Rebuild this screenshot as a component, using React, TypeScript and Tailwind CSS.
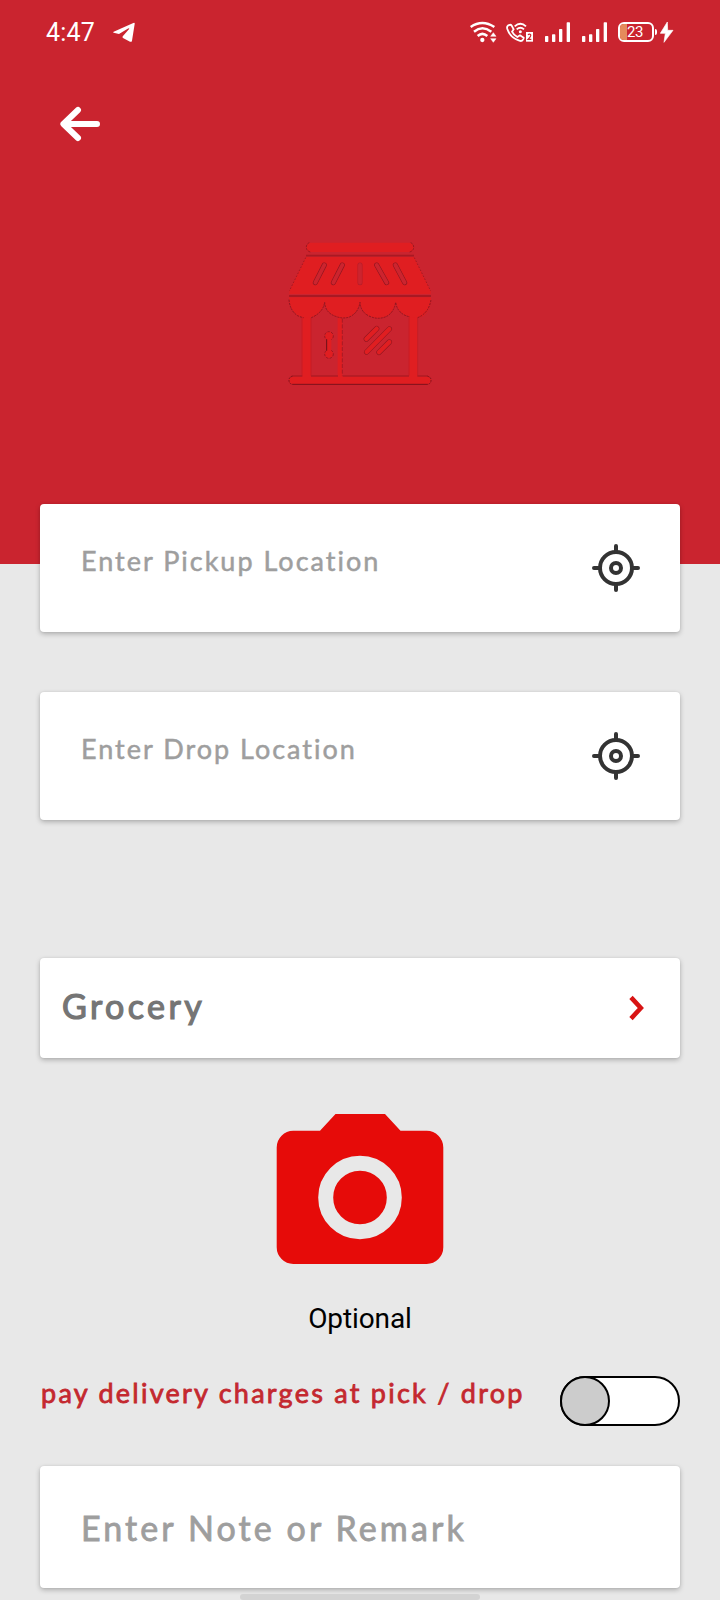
import { ReactNode } from "react";
import clsx from "clsx";

function TelegramIcon() {
  return (
    <svg width="22" height="20" viewBox="340 67 66 60" fill="white">
      <path d="M342 96 L401 70 Q406 68 405 73 L397 123 Q396 128 391 126 L370 115 Q367 112 370 109 L389 87 Q388 84 384 87 L358 103 L342 99 Q339 98 342 96 Z" />
    </svg>
  );
}

function WifiIcon() {
  return (
    <svg width="27" height="22" viewBox="30 33 81 66" fill="none" stroke="white" strokeWidth="7.5">
      <path d="M32 51 Q67 27 103 51" />
      <path d="M42 65 Q67 45 94 65" />
      <path d="M53 78 Q67 65 82 78" />
      <circle cx="67" cy="90" r="6.5" fill="white" stroke="none" />
      <path d="M92 79 L100 68 L108 79 Z M92 86 L100 97 L108 86 Z" fill="white" stroke="white" strokeWidth="1.5" />
    </svg>
  );
}

function WifiCallIcon() {
  return (
    <svg width="28" height="22" viewBox="138 33 84 66" fill="none" stroke="white" strokeWidth="5.5">
      <path
        d="M148 45 Q139 47 142 57 Q151 84 178 92 Q187 95 190 87 L191 83 L180 76 L172 81 Q161 75 156 65 L161 58 L155 47 Q152 43 148 45 Z"
        strokeLinejoin="round"
      />
      <path d="M164 49 Q181 33 198 49" />
      <path d="M170 58 Q181 48 192 58" />
      <circle cx="181" cy="65" r="4.5" fill="white" stroke="none" />
      <rect x="198" y="66" width="21" height="29" fill="white" stroke="none" />
      <path d="M204 75 Q208 70 212 74 Q214 78 204 88 H214" stroke="#ca242f" strokeWidth="3.5" />
    </svg>
  );
}

function SignalIcon() {
  return (
    <svg width="25" height="22" viewBox="255 33 75 66" fill="white">
      <rect x="255" y="78" width="10" height="18" rx="2" />
      <rect x="276" y="73" width="10" height="23" rx="2" />
      <rect x="297" y="57" width="10" height="39" rx="2" />
      <rect x="320" y="37" width="10" height="59" rx="2" />
    </svg>
  );
}

function Battery({ level }: { level: number }) {
  return (
    <div className="flex items-center gap-px">
      <div className="relative h-5 w-9 overflow-hidden rounded-md border-2 border-white">
        <div className="absolute inset-y-0 left-0 bg-[#e58b5c]" style={{ width: `${level}%` }} />
        <div className="relative -ml-0.5 text-center font-['Roboto'] text-[15px] leading-4 tracking-[-0.5px] text-white">
          {level}
        </div>
      </div>
      <div className="h-1.5 w-0.5 rounded-r-sm bg-white" />
    </div>
  );
}

function BoltIcon() {
  return (
    <svg width="14" height="22" viewBox="603 33 42 66" fill="white" stroke="white" strokeWidth="2" strokeLinejoin="round">
      <path d="M625 36 L604 70 H619 L615 97 L642 61 H626 Z" />
    </svg>
  );
}

function StatusBar() {
  return (
    <div className="flex h-16 items-center pl-[46px] pr-[46px]">
      <span className="w-[49px] pt-px font-['Roboto'] text-[25px] leading-8 tracking-[0.2px] text-white">4:47</span>
      <div className="ml-[18px]">
        <TelegramIcon />
      </div>
      <div className="ml-auto flex items-center">
        <WifiIcon />
        <div className="ml-[9px]"><WifiCallIcon /></div>
        <div className="ml-[11px]"><SignalIcon /></div>
        <div className="ml-3"><SignalIcon /></div>
        <div className="ml-[11px]"><Battery level={23} /></div>
        <div className="ml-[3px]"><BoltIcon /></div>
      </div>
    </div>
  );
}

function BackArrow() {
  return (
    <svg width="40" height="36" viewBox="0 0 40 36" fill="none" stroke="white" strokeWidth="6" strokeLinecap="round" strokeLinejoin="round">
      <path d="M18 4 L3.4 18 L18 32 M5 18 H37" />
    </svg>
  );
}

function StoreIcon() {
  return (
    <svg width="180" height="170" viewBox="0 0 540 510" fill="none">
      <rect x="109" y="38" width="322" height="28" rx="13" fill="#e01e21" />
      <path
        d="M121 66 Q109 62 109 52 Q109 42 118 38 M419 66 Q431 62 431 52 Q431 42 422 38"
        stroke="#8f1620"
        strokeWidth="2.5"
        strokeDasharray="7 3"
      />
      <path d="M108 81 H432 L482 182 V192 H58 V182 Z" fill="#e01e21" />
      <path d="M108 77 H432" stroke="#a91923" strokeWidth="5" />
      <path d="M107 83 L58 183 M433 83 L482 183" stroke="#8f1620" strokeWidth="2.5" strokeDasharray="4 6" />
      <g strokeLinecap="round">
        <path
          d="M163 105 L136 158 M217 105 L190 158 M320 105 L350 158 M376 105 L404 158"
          stroke="#8f1620"
          strokeWidth="15"
        />
        <path d="M270 105 V158" stroke="#b41d28" strokeWidth="15" />
        <path
          d="M163 105 L136 158 M217 105 L190 158 M270 105 V158 M320 105 L350 158 M376 105 L404 158"
          stroke="#cc242e"
          strokeWidth="11.5"
        />
      </g>
      <path d="M95 240 H124 V438 H203 V240 H217 V438 H416 V240 H443 V438 H470 Q483 440 483 451 Q483 463 470 463 H70 Q57 463 57 451 Q57 440 70 438 H95 Z" fill="#e01e21" />
      <path d="M57 202 H483 Q484 238 461 257 Q443 268 420 261 Q382 252 377 217 Q371 252 343 262 Q320 269 297 258 Q272 246 270 217 Q265 249 238 261 Q218 268 194 258 Q165 246 164 217 Q159 248 130 261 Q109 267 83 257 Q57 238 57 202 Z" fill="#e01e21" />
      <path
        d="M57 209 Q60 243 83 257 Q93 262 101 263 M124 263 Q159 248 164 217 Q165 246 194 258 Q218 268 238 261 Q265 249 270 217 Q272 246 297 258 Q320 269 343 262 Q371 252 377 217 Q382 252 420 261 M443 263 Q476 250 483 209"
        stroke="#8f1620"
        strokeWidth="3"
        strokeDasharray="6 3"
      />
      <path d="M57 198 H483" stroke="#a91923" strokeWidth="6" />
      <path d="M96 264 V437 M123 264 V437 M417 264 V437 M443 264 V437" stroke="#b91d29" strokeWidth="2" />
      <path d="M217 266 V437" stroke="#a01923" strokeWidth="2.5" strokeDasharray="12 5" />
      <path d="M65 438 H97 M123 438 H204 M218 438 H417 M442 438 H474" stroke="#b01b25" strokeWidth="4" />
      <path d="M67 463 H473" stroke="#7d121b" strokeWidth="3" />
      <path
        d="M67 439 Q57 441 57 451 Q57 461 67 463 M473 439 Q483 441 483 451 Q483 461 473 463"
        stroke="#7d121b"
        strokeWidth="3"
        strokeDasharray="5 3"
      />
      <g fill="#e01e21" stroke="#8f1620" strokeWidth="2.5" strokeDasharray="7 4">
        <circle cx="177" cy="318" r="13" />
        <circle cx="177" cy="372" r="13" />
      </g>
      <path d="M170 325 H184 V364 H170 Z" fill="#e01e21" />
      <path d="M170 328 V362" stroke="#6d1018" strokeWidth="3" />
      <g strokeLinecap="round">
        <path d="M289 327 L320 296 M290 366 L358 297 M327 367 L358 336" stroke="#8f1620" strokeWidth="16" />
        <path d="M289 327 L320 296 M290 366 L358 297 M327 367 L358 336" stroke="#e01e21" strokeWidth="13" />
      </g>
    </svg>
  );
}

function LocateIcon() {
  return (
    <svg width="48" height="48" viewBox="0 0 48 48" fill="none" stroke="#333333" strokeWidth="4" strokeLinecap="round">
      <circle cx="24" cy="24" r="16" />
      <circle cx="24" cy="24" r="5" />
      <path d="M24 2 V7 M24 41 V46 M2 24 H7 M41 24 H46" />
    </svg>
  );
}

function ChevronIcon() {
  return (
    <svg width="16" height="26" viewBox="0 0 16 26" fill="none" stroke="#d81414" strokeWidth="4.6">
      <path d="M2 2.4 L11.8 13 L2 23.6" />
    </svg>
  );
}

function CameraIcon() {
  return (
    <svg width="168" height="150" viewBox="0 0 168 150">
      <path
        d="M59.5 0 H109 L124.5 16.7 H150.7 A16.7 16.7 0 0 1 167.3 33.4 V133.3 A16.7 16.7 0 0 1 150.7 150 H17.3 A16.7 16.7 0 0 1 0.7 133.3 V33.4 A16.7 16.7 0 0 1 17.3 16.7 H44 Z"
        fill="#e60b09"
      />
      <circle cx="84" cy="83.5" r="34.3" fill="none" stroke="#e8e8e8" strokeWidth="15" />
    </svg>
  );
}

interface CardProps {
  className?: string;
  children: ReactNode;
}

function Card({ className, children }: CardProps) {
  return (
    <div
      className={clsx(
        "mx-10 flex items-center justify-between rounded bg-white shadow-[0_2px_5px_rgba(0,0,0,0.25),0_0_2px_rgba(0,0,0,0.08)]",
        className
      )}
    >
      {children}
    </div>
  );
}

function LocationField({ placeholder }: { placeholder: string }) {
  return (
    <Card className="h-32 pl-[41px] pr-10">
      <span className="whitespace-nowrap pb-3.5 text-[27px] tracking-[2px] text-[#9e9e9e] [-webkit-text-stroke:0.5px]">
        {placeholder}
      </span>
      <LocateIcon />
    </Card>
  );
}

export default function App() {
  return (
    <div className="h-[1600px] w-[720px] overflow-hidden bg-[#e8e8e8] font-['Lato',sans-serif] leading-[1.2]">
      <header className="h-[564px] bg-[#ca242f]">
        <StatusBar />
        <div className="pl-[60px] pt-[42px]">
          <BackArrow />
        </div>
        <div className="mt-[88px] flex justify-center">
          <StoreIcon />
        </div>
      </header>

      <main className="relative -mt-[60px]">
        <LocationField placeholder="Enter Pickup Location" />
        <div className="h-[60px]" />
        <LocationField placeholder="Enter Drop Location" />

        <Card className="mt-[138px] h-[100px] pl-[22px] pr-[35px]">
          <span className="pb-1 text-[34px] tracking-[3.4px] text-[#757575] [-webkit-text-stroke:1.2px]">Grocery</span>
          <ChevronIcon />
        </Card>

        <div className="mt-14 flex flex-col items-center">
          <CameraIcon />
          <span className="mt-[39px] font-['Roboto'] text-[28px] leading-8 tracking-[-0.1px] text-black">Optional</span>
        </div>

        <div className="mx-10 mt-[41px] flex h-[50px] items-center justify-between">
          <span className="whitespace-nowrap pb-4 pl-px text-[27px] tracking-[2.25px] text-[#c4282f] [-webkit-text-stroke:0.8px]">
            pay delivery charges at pick / drop
          </span>
          <div className="h-[50px] w-[120px] shrink-0 rounded-full border-2 border-black bg-white">
            <div className="-ml-0.5 -mt-0.5 size-[50px] rounded-full border-2 border-black bg-[#cccccc]" />
          </div>
        </div>

        <Card className="mt-10 h-[122px] pl-[41px]">
          <span className="whitespace-nowrap pt-0.5 text-[34px] tracking-[3.1px] text-[#9e9e9e] [-webkit-text-stroke:0.8px]">
            Enter Note or Remark
          </span>
        </Card>
        <div className="mx-auto mt-1.5 h-1.5 w-60 rounded-full bg-[#d3d3d3]" />
      </main>
    </div>
  );
}
